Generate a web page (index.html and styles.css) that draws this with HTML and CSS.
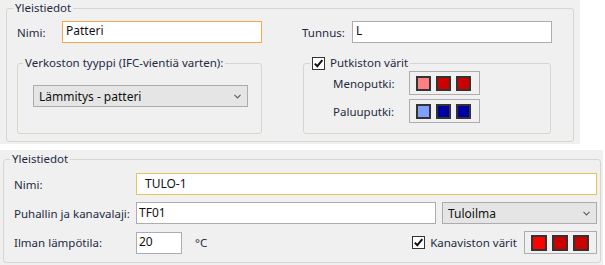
FILE: index.html
```html
<!DOCTYPE html>
<html lang="fi">
<head>
    <meta charset="UTF-8">
    <meta name="viewport" content="width=device-width, initial-scale=1.0">
    <title>Yleistiedot</title>
    <link rel="stylesheet" href="styles.css">
</head>
<body>
    <!-- Putkiston tiedot -->
    <div class="shot shot-top">
        <fieldset class="group outer">
            <legend>Yleistiedot</legend>
            <div class="top-grid">
                <div class="field-row">
                    <label class="lbl lbl-nimi">Nimi:</label>
                    <div class="input input-wide focus-orange">Patteri</div>
                </div>
                <div class="field-row">
                    <label class="lbl lbl-tunnus">Tunnus:</label>
                    <div class="input input-wide">L</div>
                </div>
                <fieldset class="group net">
                    <legend>Verkoston tyyppi (IFC-vientiä varten):</legend>
                    <div class="net-body">
                        <div class="combo">
                            <span>Lämmitys - patteri</span>
                            <svg class="chevron" width="7" height="5" viewBox="0 0 7 5"><path d="M0.5 0.8 L3.5 3.8 L6.5 0.8" fill="none" stroke="#606060" stroke-width="1.2"/></svg>
                        </div>
                    </div>
                </fieldset>
                <fieldset class="group pipes">
                    <legend class="check-legend">
                        <span class="checkbox"><svg width="11" height="11" viewBox="0 0 11 11"><path d="M1.8 5.6 L4.3 8.2 L9.3 2.2" fill="none" stroke="#111" stroke-width="2"/></svg></span>
                        <span>Putkiston värit</span>
                    </legend>
                    <div class="pipes-body">
                        <div class="pipe-row">
                            <span class="lbl lbl-pipe">Menoputki:</span>
                            <div class="swatches">
                                <span class="swatch" style="background:#ff8080"></span>
                                <span class="swatch" style="background:#cc0000"></span>
                                <span class="swatch" style="background:#cc0000"></span>
                            </div>
                        </div>
                        <div class="pipe-row">
                            <span class="lbl lbl-pipe">Paluuputki:</span>
                            <div class="swatches">
                                <span class="swatch" style="background:#80a0ff"></span>
                                <span class="swatch" style="background:#0000a0"></span>
                                <span class="swatch" style="background:#0000a0"></span>
                            </div>
                        </div>
                    </div>
                </fieldset>
            </div>
        </fieldset>
    </div>

    <!-- Kanaviston tiedot -->
    <div class="shot shot-bottom">
        <fieldset class="group outer-b">
            <legend>Yleistiedot</legend>
            <div class="rows">
                <div class="field-row">
                    <label class="lbl lbl-b">Nimi:</label>
                    <div class="input input-full focus-yellow">TULO-1</div>
                </div>
                <div class="field-row">
                    <label class="lbl lbl-b">Puhallin ja kanavalaji:</label>
                    <div class="input input-mid">TF01</div>
                    <div class="combo combo-b">
                        <span>Tuloilma</span>
                        <svg class="chevron" width="7" height="5" viewBox="0 0 7 5"><path d="M0.5 0.8 L3.5 3.8 L6.5 0.8" fill="none" stroke="#606060" stroke-width="1.2"/></svg>
                    </div>
                </div>
                <div class="field-row">
                    <label class="lbl lbl-b">Ilman lämpötila:</label>
                    <div class="input input-temp">20</div>
                    <span class="unit">°C</span>
                    <div class="check-line">
                        <span class="checkbox"><svg width="11" height="11" viewBox="0 0 11 11"><path d="M1.8 5.6 L4.3 8.2 L9.3 2.2" fill="none" stroke="#111" stroke-width="2"/></svg></span>
                        <span>Kanaviston värit</span>
                    </div>
                    <div class="swatches swatches-b">
                        <span class="swatch" style="background:#ff0000"></span>
                        <span class="swatch" style="background:#cc0000"></span>
                        <span class="swatch" style="background:#cc0000"></span>
                    </div>
                </div>
            </div>
        </fieldset>
    </div>
</body>
</html>
```

FILE: styles.css
```css
body {
    margin: 0;
    background-color: #fff;
    font-family: 'Noto Sans', sans-serif;
    font-size: 11.5px;
    color: #1e2b42;
}
.shot {
    background-color: #f0f0f0;
    box-sizing: border-box;
}
.shot-top {
    width: 580px;
    height: 144px;
}
.shot-bottom {
    width: 603px;
    height: 115px;
    margin-top: 6px;
    padding-top: 1px;
}
.group {
    margin: 0;
    padding: 0;
    min-width: 0;
    border: 1px solid #d6d6cc;
    border-radius: 3px;
}
.group > legend {
    margin-left: 6px;
    padding: 0 2px;
    line-height: 16px;
}
.outer {
    margin: 0 6px;
}
.top-grid {
    display: grid;
    grid-template-columns: 245px 250px;
    column-gap: 40px;
    row-gap: 12px;
    padding: 5px 21px 7px 10px;
}
.field-row {
    display: flex;
    align-items: center;
}
.lbl {
    flex: none;
}
.lbl-nimi {
    width: 45px;
}
.lbl-tunnus {
    width: 50px;
}
.input {
    box-sizing: border-box;
    height: 22px;
    border: 1px solid #abadb3;
    background-color: #fff;
    color: #111;
    padding: 0 3px;
    line-height: 17px;
    font-size: 12px;
    white-space: nowrap;
}
.input-wide {
    width: 200px;
}
.focus-orange {
    border-color: #f5a54a;
}
.focus-yellow {
    border-color: #e6c35c;
    line-height: 20px;
    padding-left: 8px;
}
.net > legend {
    margin-left: 5px;
}
.net-body {
    padding: 14px 13px 26px 15px;
}
.combo {
    box-sizing: border-box;
    height: 22px;
    border: 1px solid #acacac;
    background-color: #e5e5e5;
    color: #111;
    display: flex;
    align-items: center;
    justify-content: space-between;
    padding: 0 6px 0 5px;
    font-size: 12px;
}
.chevron {
    display: block;
}
.pipes {
    margin-left: 1px;
    width: 248px;
    box-sizing: border-box;
}
.check-legend {
    display: flex;
    align-items: center;
    gap: 5px;
}
.checkbox {
    box-sizing: border-box;
    width: 13px;
    height: 13px;
    border: 1px solid #333;
    background-color: #fff;
    display: flex;
    align-items: center;
    justify-content: center;
    flex: none;
}
.pipes-body {
    display: flex;
    flex-direction: column;
    gap: 4px;
    padding: 0 0 9px 29px;
}
.pipe-row {
    display: flex;
    align-items: center;
}
.lbl-pipe {
    width: 76px;
}
.swatches {
    box-sizing: border-box;
    width: 71px;
    height: 24px;
    border: 1px solid #adadad;
    display: flex;
    align-items: center;
    gap: 5px;
    padding-left: 6px;
}
.swatch {
    box-sizing: border-box;
    width: 15px;
    height: 15px;
    border: 2px solid #333;
}
.outer-b {
    margin: 0 2px 0 3px;
}
.rows {
    display: flex;
    flex-direction: column;
    gap: 7px;
    padding: 6px 3px 8px 10px;
}
.lbl-b {
    width: 122px;
}
.input-full {
    flex: 1;
}
.input-mid {
    width: 300px;
    padding-left: 2px;
    line-height: 20px;
}
.combo-b {
    width: 155px;
    margin-left: 6px;
}
.input-temp {
    width: 46px;
    padding-left: 2px;
}
.unit {
    margin-left: 13px;
}
.check-line {
    margin-left: auto;
    display: flex;
    align-items: center;
    gap: 5px;
}
.swatches-b {
    width: 73px;
    height: 23px;
    margin-left: 7px;
    padding-left: 6px;
}
.swatches-b .swatch {
    width: 16px;
    height: 16px;
}
```
